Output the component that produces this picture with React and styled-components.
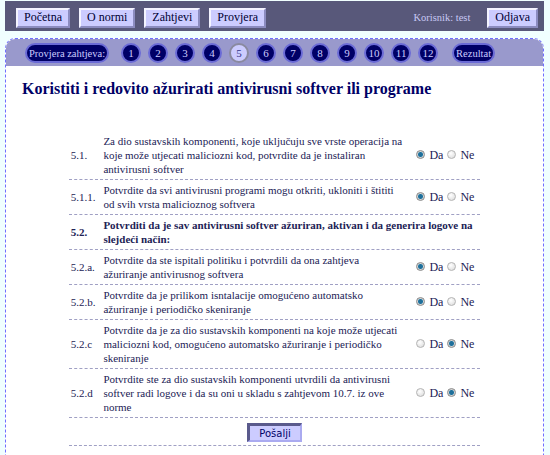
import React, { useState } from 'react'
import styled, { createGlobalStyle } from 'styled-components'

const GlobalStyle = createGlobalStyle`
    html, body {
        margin: 0;
        padding: 0;
        background: #f0ffff;
    }
    body {
        font-family: "Liberation Serif", "Times New Roman", serif;
    }
`;

const NAV = ['Početna', 'O normi', 'Zahtjevi', 'Provjera']
const STEPS = [1, 2, 3, 4, 5, 6, 7, 8, 9, 10, 11, 12]
const CURRENT = 5

const ROWS = [
    { num: '5.1.', val: 'da', text: 'Za dio sustavskih komponenti, koje uključuju sve vrste operacija na koje može utjecati maliciozni kod, potvrdite da je instaliran antivirusni softver' },
    { num: '5.1.1.', val: 'da', text: 'Potvrdite da svi antivirusni programi mogu otkriti, ukloniti i štititi od svih vrsta malicioznog softvera' },
    { num: '5.2.', heading: true, text: 'Potvrditi da je sav antivirusni softver ažuriran, aktivan i da generira logove na slejdeći način:' },
    { num: '5.2.a.', val: 'da', text: 'Potvrdite da ste ispitali politiku i potvrdili da ona zahtjeva ažuriranje antivirusnog softvera' },
    { num: '5.2.b.', val: 'da', text: 'Potvrdite da je prilikom isntalacije omogućeno automatsko ažuriranje i periodičko skeniranje' },
    { num: '5.2.c', val: 'ne', text: 'Potvrdite da je za dio sustavskih komponenti na koje može utjecati maliciozni kod, omogućeno automatsko ažuriranje i periodičko skeniranje' },
    { num: '5.2.d', val: 'ne', text: 'Potvrdite ste za dio sustavskih komponenti utvrdili da antivirusni softver radi logove i da su oni u skladu s zahtjevom 10.7. iz ove norme' },
]

export default function App() {
    const [answers, setAnswers] = useState(() =>
        ROWS.reduce((acc, r, i) => (r.val ? { ...acc, [i]: r.val } : acc), {})
    )

    const choose = (i, v) => setAnswers({ ...answers, [i]: v })

    return (
        <Page>
            <GlobalStyle />
            <TopBar>
                <NavGroup>
                    {NAV.map(n => <NavButton key={n}>{n}</NavButton>)}
                </NavGroup>
                <UserBox>
                    <UserName>Korisnik: test</UserName>
                    <NavButton>Odjava</NavButton>
                </UserBox>
            </TopBar>

            <Panel>
                <StepStrip>
                    <Pill>Provjera zahtjeva:</Pill>
                    <Steps>
                        {STEPS.map(s => (
                            <Step key={s} active={s === CURRENT}>{s}</Step>
                        ))}
                    </Steps>
                    <Pill>Rezultat</Pill>
                </StepStrip>

                <Content>
                    <Title>Koristiti i redovito ažurirati antivirusni softver ili programe</Title>
                    <Checklist>
                        <tbody>
                            {ROWS.map((r, i) => (
                                <tr key={r.num}>
                                    <NumCell bold={r.heading}>{r.num}</NumCell>
                                    {r.heading ? (
                                        <TextCell bold colSpan={2}>{r.text}</TextCell>
                                    ) : (
                                        <>
                                            <TextCell>{r.text}</TextCell>
                                            <ChoiceCell>
                                                <Choice>
                                                    <Radio
                                                        type="radio"
                                                        name={'q' + i}
                                                        checked={answers[i] === 'da'}
                                                        onChange={() => choose(i, 'da')}
                                                    />
                                                    Da
                                                </Choice>
                                                <Choice>
                                                    <Radio
                                                        type="radio"
                                                        name={'q' + i}
                                                        checked={answers[i] === 'ne'}
                                                        onChange={() => choose(i, 'ne')}
                                                    />
                                                    Ne
                                                </Choice>
                                            </ChoiceCell>
                                        </>
                                    )}
                                </tr>
                            ))}
                            <tr>
                                <SubmitCell colSpan={3}>
                                    <SubmitButton type="button">Pošalji</SubmitButton>
                                </SubmitCell>
                            </tr>
                        </tbody>
                    </Checklist>
                </Content>
            </Panel>
        </Page>
    )
}

// page wrapper
const Page = styled.div`
    padding: 1px 6px 0 5px;
`;

// top bar
const TopBar = styled.div`
    display: flex;
    align-items: center;
    justify-content: space-between;
    height: 30px;
    box-sizing: border-box;
    padding: 3px 6px 0 11px;
    background: #58587a;
`;

const NavGroup = styled.div`
    display: flex;
    gap: 9px;
`;

const NavButton = styled.button`
    height: 20px;
    padding: 0 6px;
    font-family: "Liberation Serif", "Times New Roman", serif;
    font-size: 12px;
    color: #000033;
    background: #ccccff;
    border: 2px solid;
    border-color: #f4f4ff #8c8cc0 #8c8cc0 #f4f4ff;
    cursor: pointer;
`;

const UserBox = styled.div`
    display: flex;
    align-items: center;
    gap: 17px;
`;

const UserName = styled.span`
    font-size: 10.5px;
    color: #c8c8f4;
`;

// steps panel
const Panel = styled.div`
    margin-top: 7px;
    border: 1px dashed #6f6fff;
    border-bottom: none;
    border-radius: 10px 10px 0 0;
    overflow: hidden;
    background: #fff;
`;

const StepStrip = styled.div`
    display: flex;
    align-items: center;
    height: 26px;
    padding: 1px 0 0 19px;
    background: #9999cc;
`;

const Pill = styled.div`
    display: flex;
    align-items: center;
    height: 20px;
    box-sizing: border-box;
    padding: 0 2px;
    border: 2px solid #6b6bd6;
    border-radius: 10px;
    background: #000066;
    color: #ccccff;
    font-size: 10.5px;
`;

const Steps = styled.div`
    display: flex;
    gap: 7px;
    margin: 0 14px 0 12px;
`;

const Step = styled.div`
    display: flex;
    align-items: center;
    justify-content: center;
    min-width: 20px;
    height: 20px;
    box-sizing: border-box;
    padding: 0 2px;
    border-radius: 10px;
    border: 2px solid ${p => (p.active ? '#8a8aa0' : '#6b6bd6')};
    background: ${p => (p.active ? '#ccccff' : '#000066')};
    color: ${p => (p.active ? '#333388' : '#ccccff')};
    font-size: 11px;
`;

// content
const Content = styled.div`
    padding: 12px 16px 40px;
`;

const Title = styled.h1`
    margin: 0 0 31px 0;
    font-size: 16px;
    line-height: 22px;
    font-weight: bold;
    color: #000066;
`;

const Checklist = styled.table`
    margin: 0 auto;
    border-collapse: separate;
    border-spacing: 2px 0;
    font-size: 11px;
    line-height: 14px;
    color: #222255;
`;

const Cell = styled.td`
    padding: 3px 3px;
    vertical-align: middle;
    border-bottom: 1px dashed #a0a0c4;
    font-weight: ${p => (p.bold ? 'bold' : 'normal')};
`;

const NumCell = styled(Cell)`
    width: 22px;
    padding-left: 2px;
    white-space: nowrap;
`;

const TextCell = styled(Cell)`
    width: 302px;
`;

const ChoiceCell = styled(Cell)`
    width: 64px;
    text-align: center;
    white-space: nowrap;
`;

const Choice = styled.label`
    display: inline-flex;
    align-items: center;
    gap: 4px;
    margin: 0 2px;
    font-size: 12px;
`;

const Radio = styled.input`
    appearance: none;
    width: 9px;
    height: 9px;
    margin: 0;
    border-radius: 50%;
    border: 1px solid #b4b4b4;
    background: radial-gradient(circle at 40% 35%, #ffffff, #d8d8d8);
    box-sizing: border-box;
    &:checked {
        border-color: #8a8a8a;
        background: radial-gradient(circle, #1f6f9a 0 2px, #6aa9c8 2.5px, #d4d4d4 3px);
    }
`;

const SubmitCell = styled(Cell)`
    text-align: center;
    padding: 5px 0 3px;
`;

const SubmitButton = styled.button`
    height: 19px;
    padding: 0 9px;
    font-family: "DejaVu Sans", Verdana, sans-serif;
    font-size: 10px;
    color: #000066;
    background: #ccccff;
    border-style: solid;
    border-width: 3px 2px 2px 3px;
    border-color: #5a5a8c #aaaaf0 #aaaaf0 #5a5a8c;
    cursor: pointer;
`;
